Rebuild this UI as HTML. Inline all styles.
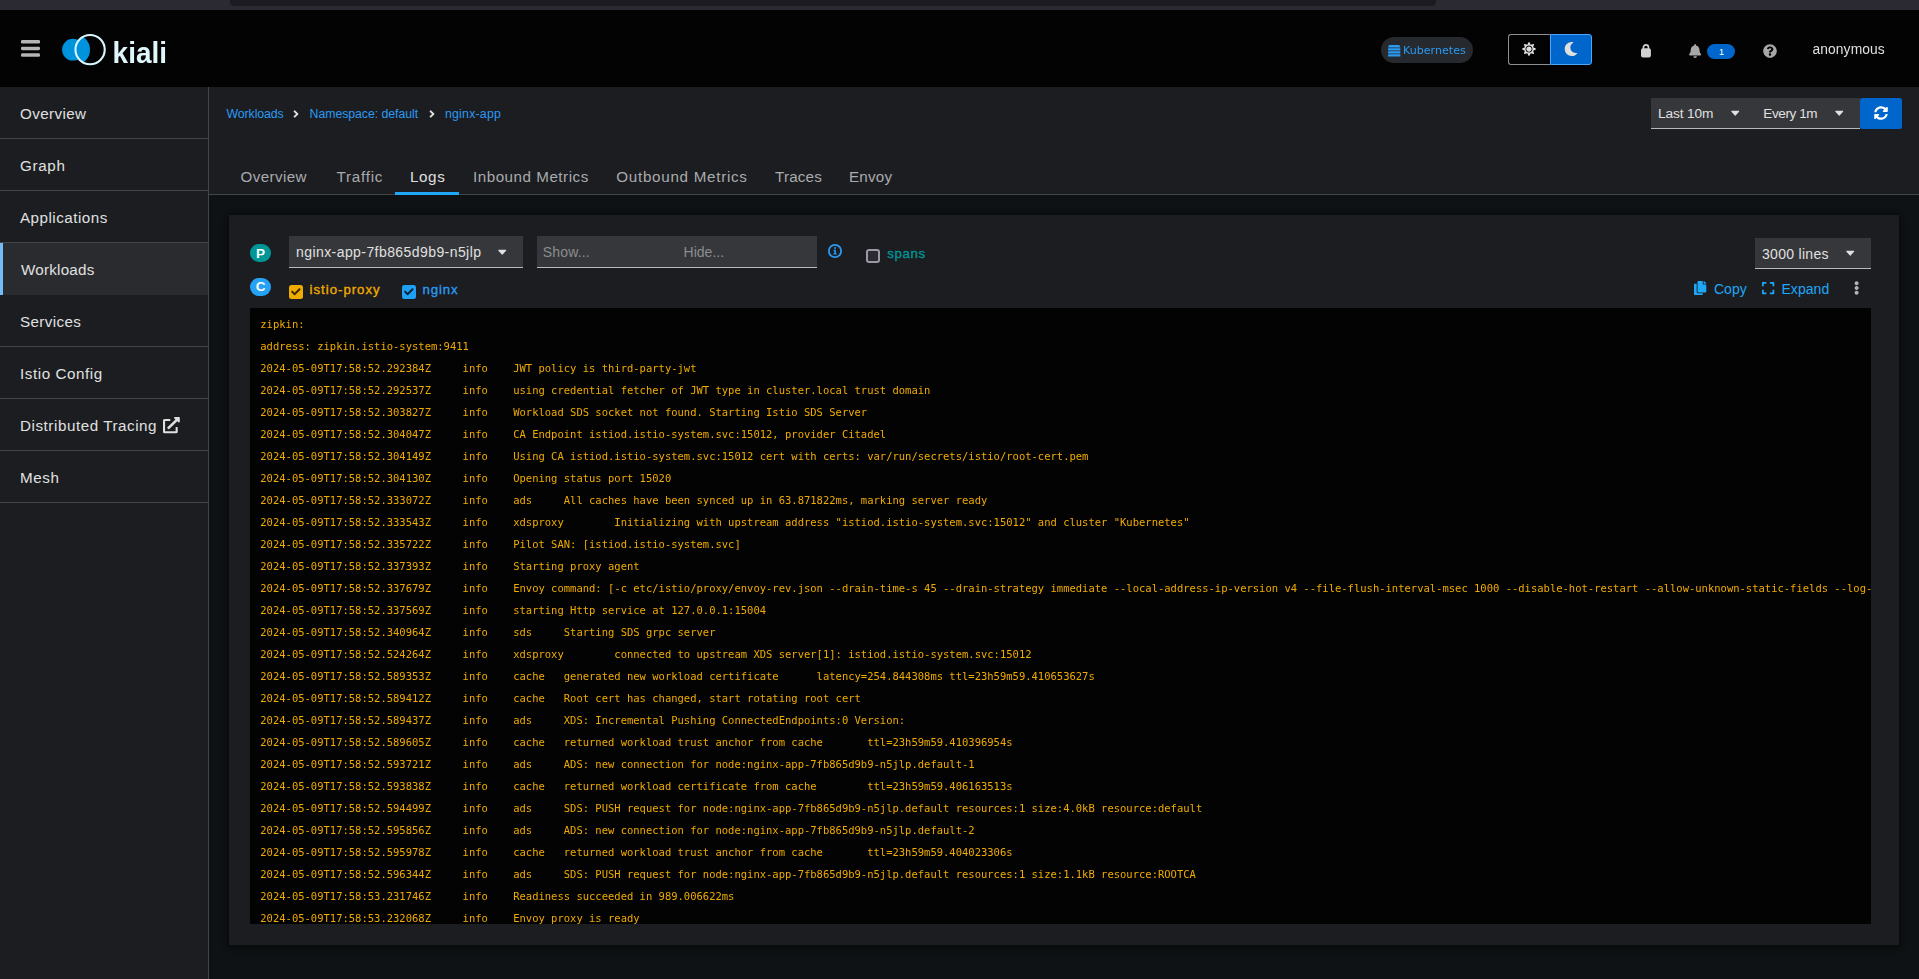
<!DOCTYPE html>
<html lang="en">
<head>
<meta charset="utf-8">
<title>Kiali</title>
<style>
*{box-sizing:border-box;margin:0;padding:0}
html,body{width:1919px;height:979px;overflow:hidden;background:#0f1214;font-family:"Liberation Sans",sans-serif;color:#e0e0e0}
.abs{position:absolute}
.t{position:absolute;white-space:nowrap;line-height:1}
#chrome{left:0;top:0;width:1919px;height:10px;background:#2b2a33}
#chrome i{position:absolute;left:230px;top:0;width:1206px;height:6px;background:#1c1b22;border-radius:0 0 4px 4px}
#mast{left:0;top:10px;width:1919px;height:77px;background:#030303;filter:opacity(1)}
#side{left:0;top:87px;width:209px;height:892px;background:#1b1d21;border-right:1px solid #444548}
.nav{position:absolute;left:0;width:208px;height:52px;border-bottom:1px solid #444548;font-size:16px;color:#e0e0e0}
.nav.cur{background:#292b2f;border-bottom:0}
.nav.cur:before{content:"";position:absolute;left:0;top:0;width:3px;height:52px;background:#73bcf7}
#head{left:209px;top:87px;width:1710px;height:108px;background:#1b1d21;border-bottom:1px solid #444548}
#panel{left:229px;top:215px;width:1670px;height:730px;background:#1b1d21;box-shadow:0 2px 6px 0 rgba(3,3,3,.5),0 0 4px 0 rgba(3,3,3,.4)}
#log{left:250px;top:308px;width:1621px;height:616px;background:#030303;overflow:hidden}
#log pre{position:absolute;left:10.3px;top:5px;font-family:"DejaVu Sans Mono","Liberation Mono",monospace;font-size:10.5px;line-height:22px;color:#f0ab00;filter:opacity(1);tab-size:8;-moz-tab-size:8;white-space:pre}
.bc{color:#2b9af3}
.tab{color:#aaabac}
.fc{position:absolute;background:#36373a;border-bottom:1px solid #b8bbbe}
svg{position:absolute;overflow:visible}
</style>
</head>
<body>
<div id="chrome" class="abs"><i></i></div>
<div id="mast" class="abs">
  <svg style="left:21px;top:30px" width="19" height="17" viewBox="0 0 19 17"><g fill="#b3b4b6"><rect x="0" y="0.1" width="19" height="3.5" rx="1.3"/><rect x="0" y="6.75" width="19" height="3.4" rx="1.3"/><rect x="0" y="13.3" width="19" height="3.5" rx="1.3"/></g></svg>
  <svg id="logo" style="left:55px;top:18px" width="120" height="44" viewBox="55 28 120 44">
    <defs><clipPath id="lens"><circle cx="90" cy="49.6" r="14.6"/></clipPath></defs>
    <circle cx="73" cy="49.7" r="10.9" fill="#0093dd"/>
    <circle cx="74.5" cy="49.7" r="15.5" fill="#0093dd" clip-path="url(#lens)"/>
    <circle cx="90.1" cy="49.6" r="14.65" fill="none" stroke="#d9f5fd" stroke-width="2.1"/>
    <text id="kiali" x="112.6" y="62.9" font-family="Liberation Sans, sans-serif" font-weight="700" font-size="30" fill="#dff6fd" textLength="54.4" lengthAdjust="spacingAndGlyphs">kiali</text>
  </svg>
  <div class="abs" style="left:1381px;top:27px;width:92px;height:26px;border-radius:13px;background:#26292d"></div>
  <svg style="left:1388px;top:34.8px" width="12.4" height="11.6" viewBox="0 0 12.4 11.6"><g fill="#2b9af3"><path d="M1.6 0h9.2c.5 0 .9.3 1 .8l.6 1.7H0L.6.8c.1-.5.5-.8 1-.8z"/><rect x="0" y="3.3" width="12.4" height="2.2" rx=".4"/><rect x="0" y="6.3" width="12.4" height="2.2" rx=".4"/><rect x="0" y="9.3" width="12.4" height="2.3" rx=".4"/></g></svg>
  <span class="t" id="kube" style="left:1403.00px;top:34.70px;font-family:'DejaVu Sans',sans-serif;font-size:11.05px;color:#2b9af3;letter-spacing:0.020px">Kubernetes</span>
  <div class="abs" style="left:1508px;top:24px;width:42px;height:31px;border:1px solid #8f8f8f;border-right:0;border-radius:3px 0 0 3px;background:#030303"></div>
  <div class="abs" style="left:1550px;top:24px;width:42px;height:31px;border:1px solid #4da6f7;border-radius:0 3px 3px 0;background:#0066cc"></div>
  <svg style="left:1521.95px;top:31.95px" width="14" height="14" viewBox="0 0 512 512"><path fill="#e0e0e0" d="M256 160c-52.900 0-96 43.100-96 96s43.100 96 96 96 96-43.100 96-96-43.100-96-96-96zm246.400 80.500l-94.700-47.300 33.500-100.400c4.500-13.600-8.400-26.500-21.900-21.900l-100.400 33.500-47.400-94.800c-6.400-12.800-24.600-12.800-31 0l-47.300 94.700L92.700 70.800c-13.600-4.500-26.500 8.400-21.900 21.900l33.500 100.400-94.700 47.400c-12.800 6.400-12.800 24.600 0 31l94.700 47.300-33.500 100.500c-4.500 13.600 8.400 26.500 21.900 21.900l100.400-33.500 47.300 94.700c6.400 12.800 24.600 12.800 31 0l47.300-94.700 100.400 33.500c13.600 4.500 26.500-8.400 21.900-21.900l-33.500-100.400 94.700-47.300c13-6.500 13-24.700.2-31.100zm-155.900 106c-49.900 49.900-131.100 49.900-181 0-49.900-49.900-49.900-131.100 0-181 49.900-49.900 131.100-49.900 181 0 49.900 49.900 49.900 131.100 0 181z"/></svg>
  <svg style="left:1563.9px;top:31.9px" width="14" height="14" viewBox="0 0 512 512"><path fill="#e0e0e0" d="M283.211 512c78.962 0 151.079-35.925 198.857-94.792 7.068-8.708-.639-21.430-11.562-19.350-124.203 23.654-238.262-71.576-238.262-196.954 0-72.222 38.662-138.635 101.498-174.394 9.686-5.512 7.250-20.197-3.756-22.230A258.156 258.156 0 0 0 283.211 0c-141.309 0-256 114.511-256 256 0 141.309 114.511 256 256 256z"/></svg>
  <svg style="left:1641.1px;top:34.3px" width="9.9" height="13.5" viewBox="0 0 9.9 13.5"><rect x="0" y="4.3" width="9.9" height="9.2" rx="2" fill="#d2d2d2"/><path d="M2.45 5.5V3.35a2.5 2.5 0 0 1 5 0V5.5" fill="none" stroke="#d2d2d2" stroke-width="1.7"/></svg>
  <svg style="left:1688.8px;top:34.2px" width="12.25" height="14" viewBox="0 0 448 512"><path fill="#a8a8a8" d="M224 512c35.320 0 63.970-28.650 63.970-64H160.030c0 35.350 28.650 64 63.970 64zm215.390-149.710c-19.320-20.760-55.470-51.990-55.470-154.290 0-77.700-54.480-139.900-127.940-155.160V32c0-17.670-14.320-32-31.980-32s-31.980 14.330-31.980 32v20.840C118.560 68.100 64.080 130.300 64.080 208c0 102.300-36.150 133.530-55.470 154.290-6 6.450-8.660 14.160-8.610 21.710.11 16.400 12.980 32 32.100 32h383.800c19.120 0 32-15.600 32.100-32 .05-7.550-2.610-15.270-8.610-21.710z"/></svg>
  <div class="abs" style="left:1707px;top:34px;width:28px;height:15px;border-radius:7.5px;background:#0066cc"></div>
  <span class="t" id="one" style="left:1719px;top:37.2px;font-size:9.6px;color:#fff">1</span>
  <svg style="left:1763px;top:34.2px" width="14" height="14" viewBox="0 0 512 512"><path fill="#a8a8a8" d="M504 256c0 136.997-111.043 248-248 248S8 392.997 8 256C8 119.083 119.043 8 256 8s248 111.083 248 248zM262.655 90c-54.497 0-89.255 22.957-116.549 63.758-3.536 5.286-2.353 12.415 2.715 16.258l34.699 26.310c5.205 3.947 12.621 3.008 16.665-2.122 17.864-22.658 30.113-35.797 57.303-35.797 20.429 0 45.698 13.148 45.698 32.958 0 14.976-12.363 22.667-32.534 33.976C247.128 238.528 216 254.941 216 296v4c0 6.627 5.373 12 12 12h56c6.627 0 12-5.373 12-12v-1.333c0-28.462 83.186-29.647 83.186-106.667 0-58.002-60.165-102-116.531-102zM256 338c-25.365 0-46 20.635-46 46 0 25.364 20.635 46 46 46s46-20.636 46-46c0-25.365-20.635-46-46-46z"/></svg>
  <span class="t" id="anon" style="left:1812.50px;top:32.84px;font-size:13.8px;color:#e0e0e0;letter-spacing:0.108px">anonymous</span>
</div>
<div id="side" class="abs">
  <div class="nav" style="top:0"><span class="t" id="nav1" style="left:20.00px;top:19.20px;font-size:15.2px;letter-spacing:0.386px">Overview</span></div>
  <div class="nav" style="top:52px"><span class="t" id="nav2" style="left:20.00px;top:19.20px;font-size:15.2px;letter-spacing:0.685px">Graph</span></div>
  <div class="nav" style="top:104px"><span class="t" id="nav3" style="left:20.00px;top:19.20px;font-size:15.2px;letter-spacing:0.488px">Applications</span></div>
  <div class="nav cur" style="top:156px"><span class="t" id="nav4" style="left:21.00px;top:19.20px;font-size:15.2px;letter-spacing:0.225px">Workloads</span></div>
  <div class="nav" style="top:208px"><span class="t" id="nav5" style="left:20.00px;top:19.20px;font-size:15.2px;letter-spacing:0.381px">Services</span></div>
  <div class="nav" style="top:260px"><span class="t" id="nav6" style="left:20.00px;top:19.20px;font-size:15.2px;letter-spacing:0.569px">Istio Config</span></div>
  <div class="nav" style="top:312px"><span class="t" id="nav7" style="left:20.00px;top:19.20px;font-size:15.2px;letter-spacing:0.550px">Distributed Tracing</span><svg style="left:162.5px;top:17.8px" width="16.8" height="16.2" viewBox="0 0 512 512" preserveAspectRatio="none"><path fill="#e0e0e0" d="M432,320H400a16,16,0,0,0-16,16V448H64V128H208a16,16,0,0,0,16-16V80a16,16,0,0,0-16-16H48A48,48,0,0,0,0,112V464a48,48,0,0,0,48,48H400a48,48,0,0,0,48-48V336A16,16,0,0,0,432,320ZM488,0h-128c-21.370,0-32.050,25.910-17,41l35.730,35.730L135,320.370a24,24,0,0,0,0,34L157.670,377a24,24,0,0,0,34,0L435.280,133.320,471,169c15,15,41,4.500,41-17V24A24,24,0,0,0,488,0Z"/></svg></div>
  <div class="nav" style="top:364px"><span class="t" id="nav8" style="left:20.00px;top:19.20px;font-size:15.2px;letter-spacing:0.600px">Mesh</span></div>
</div>
<div id="head" class="abs">
  <span class="t bc" id="bc1" style="font-size:12.3px;left:17.60px;top:21.08px;letter-spacing:-0.108px">Workloads</span>
  <svg style="left:83.9px;top:20.6px" width="6" height="12" viewBox="0 0 256 512"><path fill="#e0e0e0" d="M224.300 273l-136 136c-9.400 9.400-24.600 9.400-33.900 0l-22.600-22.600c-9.400-9.400-9.400-24.600 0-33.900l96.400-96.400-96.400-96.400c-9.400-9.400-9.400-24.600 0-33.900L54.300 103c9.400-9.400 24.600-9.400 33.900 0l136 136c9.500 9.400 9.500 24.600.1 34z"/></svg>
  <span class="t bc" id="bc2" style="font-size:12.3px;left:100.60px;top:21.08px;letter-spacing:-0.051px">Namespace: default</span>
  <svg style="left:219.9px;top:20.6px" width="6" height="12" viewBox="0 0 256 512"><path fill="#e0e0e0" d="M224.300 273l-136 136c-9.400 9.400-24.600 9.400-33.900 0l-22.600-22.600c-9.400-9.400-9.400-24.600 0-33.900l96.400-96.400-96.400-96.400c-9.400-9.400-9.400-24.600 0-33.900L54.300 103c9.400-9.400 24.600-9.400 33.900 0l136 136c9.500 9.400 9.500 24.600.1 34z"/></svg>
  <span class="t bc" id="bc3" style="font-size:12.3px;left:236.00px;top:21.08px;letter-spacing:0.221px">nginx-app</span>
  <span class="t tab" id="tab1" style="font-size:15.2px;left:31.50px;top:82.20px;letter-spacing:0.386px">Overview</span>
  <span class="t tab" id="tab2" style="font-size:15.2px;left:127.50px;top:82.20px;letter-spacing:0.750px">Traffic</span>
  <span class="t tab" id="tab3" style="font-size:15.2px;left:201.00px;top:82.20px;color:#e0e0e0;letter-spacing:0.600px">Logs</span>
  <span class="t tab" id="tab4" style="font-size:15.2px;left:264.00px;top:82.20px;letter-spacing:0.514px">Inbound Metrics</span>
  <span class="t tab" id="tab5" style="font-size:15.2px;left:407.30px;top:82.20px;letter-spacing:0.720px">Outbound Metrics</span>
  <span class="t tab" id="tab6" style="font-size:15.2px;left:566.00px;top:82.20px;letter-spacing:0.180px">Traces</span>
  <span class="t tab" id="tab7" style="font-size:15.2px;left:640.00px;top:82.20px;letter-spacing:0.226px">Envoy</span>
  <div class="abs" style="left:186px;top:105px;width:64px;height:3px;background:#1fa7f8"></div>
  <div class="fc" style="left:1442px;top:11px;width:209px;height:31px"></div>
  <span class="t" id="dd1" style="left:1449.00px;top:19.90px;font-size:13.7px;letter-spacing:-0.129px">Last 10m</span>
  <svg style="left:1521.60px;top:18.10px" width="8.5" height="15.2" viewBox="0 0 320 512" preserveAspectRatio="none"><path fill="#e0e0e0" d="M31.3 192h257.3c17.8 0 26.7 21.5 14.1 34.1L174.1 354.8c-7.8 7.8-20.5 7.8-28.3 0L17.200 226.100C4.600 213.500 13.500 192 31.300 192z"/></svg>
  <span class="t" id="dd2" style="left:1554.30px;top:20.02px;font-size:13.5px;letter-spacing:-0.387px">Every 1m</span>
  <svg style="left:1625.60px;top:18.10px" width="8.5" height="15.2" viewBox="0 0 320 512" preserveAspectRatio="none"><path fill="#e0e0e0" d="M31.3 192h257.3c17.8 0 26.7 21.5 14.1 34.1L174.1 354.8c-7.8 7.8-20.5 7.8-28.3 0L17.200 226.100C4.600 213.500 13.500 192 31.300 192z"/></svg>
  <div class="abs" style="left:1651px;top:11px;width:42px;height:31px;border-radius:2.5px;background:#0066cc"></div>
  <svg style="left:1664.9px;top:18.5px" width="14" height="14" viewBox="0 0 512 512"><path fill="#fff" d="M370.720 133.280C339.458 104.008 298.888 87.962 255.848 88c-77.458.068-144.328 53.178-162.791 126.850-1.344 5.363-6.122 9.150-11.651 9.150H24.103c-7.498 0-13.194-6.807-11.807-14.176C33.933 94.924 134.813 8 256 8c66.448 0 126.791 26.136 171.315 68.685L463.030 40.970C478.149 25.851 504 36.559 504 57.941V192c0 13.255-10.745 24-24 24H345.941c-21.382 0-32.090-25.851-16.971-40.971l41.750-41.749zM32 296h134.059c21.382 0 32.090 25.851 16.971 40.971l-41.750 41.750c31.262 29.273 71.835 45.319 114.876 45.280 77.418-.070 144.315-53.144 162.787-126.849 1.344-5.363 6.122-9.150 11.651-9.150h57.304c7.498 0 13.194 6.807 11.807 14.176C478.067 417.076 377.187 504 256 504c-66.448 0-126.791-26.136-171.315-68.685L48.970 471.030C33.851 486.149 8 475.441 8 454.059V320c0-13.255 10.745-24 24-24z"/></svg>
</div>
<div id="panel" class="abs">
  <div class="abs" style="left:20.8px;top:28.5px;width:21.2px;height:18.4px;border-radius:10px;background:#009596"></div>
  <span class="t" id="pP" style="left:26.9px;top:31.67px;font-size:13.5px;font-weight:700;color:#fff">P</span>
  <div class="abs" style="left:20.8px;top:62.8px;width:21.2px;height:18.4px;border-radius:10px;background:#25a2f6"></div>
  <span class="t" id="pC" style="left:26.8px;top:65.17px;font-size:13.5px;font-weight:700;color:#fff">C</span>
  <div class="fc" style="left:60px;top:21px;width:233.5px;height:32px"></div>
  <span class="t" id="pod" style="left:67.00px;top:30.20px;font-size:14px;letter-spacing:0.424px">nginx-app-7fb865d9b9-n5jlp</span>
  <svg style="left:268.70px;top:29.10px" width="8.5" height="15.2" viewBox="0 0 320 512" preserveAspectRatio="none"><path fill="#e0e0e0" d="M31.3 192h257.3c17.8 0 26.7 21.5 14.1 34.1L174.1 354.8c-7.8 7.8-20.5 7.8-28.3 0L17.200 226.100C4.600 213.500 13.500 192 31.300 192z"/></svg>
  <div class="fc" style="left:307.6px;top:21px;width:280.3px;height:32px"></div>
  <span class="t" id="show" style="left:313.80px;top:30.20px;font-size:14px;color:#8a8d90;letter-spacing:0.150px">Show...</span>
  <span class="t" id="hide" style="left:454.60px;top:30.20px;font-size:14px;color:#8a8d90;letter-spacing:0.000px">Hide...</span>
  <svg style="left:599px;top:29.2px" width="14" height="14" viewBox="0 0 14 14"><circle cx="7" cy="7" r="6.15" fill="none" stroke="#2b9af3" stroke-width="1.8"/><circle cx="7" cy="3.9" r="1" fill="#2b9af3"/><path fill="#2b9af3" d="M5.400 5.700h2.500v3.900h.9v1H5.300v-1h.9V6.700h-.8z"/></svg>
  <div class="abs" style="left:637px;top:34.2px;width:13.8px;height:13.8px;border:2.2px solid #9b98a6;border-radius:3px;background:#2b2a33"></div>
  <span class="t" id="spans" style="left:658.20px;top:32.18px;font-size:13.2px;font-weight:400;-webkit-text-stroke:0.35px #009596;color:#009596;letter-spacing:0.676px">spans</span>
  <div class="abs" style="left:59.8px;top:69.8px;width:14.2px;height:14px;border-radius:2.5px;background:#f0ab00"></div>
  <svg style="left:62.2px;top:72.2px" width="9.6" height="9.6" viewBox="0 0 512 512"><path fill="#3a2800" d="M173.898 439.404l-166.400-166.400c-9.997-9.997-9.997-26.206 0-36.204l36.203-36.204c9.997-9.998 26.207-9.998 36.204 0L192 312.690 432.095 72.596c9.997-9.997 26.207-9.997 36.204 0l36.203 36.204c9.997 9.997 9.997 26.206 0 36.204l-294.400 294.401c-9.998 9.997-26.207 9.997-36.204-.001z"/></svg>
  <span class="t" id="istio" style="left:80.60px;top:68.12px;font-size:13.2px;font-weight:400;-webkit-text-stroke:0.35px #f0ab00;color:#f0ab00;letter-spacing:0.990px">istio-proxy</span>
  <div class="abs" style="left:172.8px;top:69.8px;width:14.2px;height:14px;border-radius:2.5px;background:#1fa0f5"></div>
  <svg style="left:175.2px;top:72.2px" width="9.6" height="9.6" viewBox="0 0 512 512"><path fill="#0c2238" d="M173.898 439.404l-166.400-166.400c-9.997-9.997-9.997-26.206 0-36.204l36.203-36.204c9.997-9.998 26.207-9.998 36.204 0L192 312.690 432.095 72.596c9.997-9.997 26.207-9.997 36.204 0l36.203 36.204c9.997 9.997 9.997 26.206 0 36.204l-294.400 294.401c-9.998 9.997-26.207 9.997-36.204-.001z"/></svg>
  <span class="t" id="nginx" style="left:193.50px;top:68.12px;font-size:13.2px;font-weight:400;-webkit-text-stroke:0.35px #2b9af3;color:#2b9af3;letter-spacing:0.900px">nginx</span>
  <div class="fc" style="left:1526px;top:23px;width:116px;height:31px"></div>
  <span class="t" id="lines" style="left:1533.00px;top:32.20px;font-size:14px;letter-spacing:0.300px">3000 lines</span>
  <svg style="left:1616.60px;top:30.10px" width="8.5" height="15.2" viewBox="0 0 320 512" preserveAspectRatio="none"><path fill="#e0e0e0" d="M31.3 192h257.3c17.8 0 26.7 21.5 14.1 34.1L174.1 354.8c-7.8 7.8-20.5 7.8-28.3 0L17.200 226.100C4.600 213.500 13.500 192 31.300 192z"/></svg>
  <svg style="left:1464.6px;top:66px" width="12.3" height="14" viewBox="0 0 448 512"><path fill="#1fa7f8" d="M320 448v40c0 13.255-10.745 24-24 24H24c-13.255 0-24-10.745-24-24V120c0-13.255 10.745-24 24-24h72v296c0 30.879 25.121 56 56 56h168zm0-344V0H152c-13.255 0-24 10.745-24 24v368c0 13.255 10.745 24 24 24h272c13.255 0 24-10.745 24-24V128H344c-13.200 0-24-10.800-24-24zm120.971-31.029L375.029 7.029A24 24 0 0 0 358.059 0H352v96h96v-6.059a24 24 0 0 0-7.029-16.970z"/></svg>
  <span class="t" id="copy" style="left:1485.00px;top:67.20px;font-size:14px;color:#1fa7f8;letter-spacing:-0.000px">Copy</span>
  <svg style="left:1532.8px;top:66.2px" width="12.25" height="14" viewBox="0 0 448 512"><path fill="#1fa7f8" d="M0 180V56c0-13.300 10.700-24 24-24h124c6.600 0 12 5.400 12 12v40c0 6.600-5.400 12-12 12H64v84c0 6.600-5.400 12-12 12H12c-6.600 0-12-5.400-12-12zM288 44v40c0 6.600 5.400 12 12 12h84v84c0 6.600 5.400 12 12 12h40c6.600 0 12-5.400 12-12V56c0-13.300-10.700-24-24-24H300c-6.600 0-12 5.400-12 12zm148 276h-40c-6.600 0-12 5.400-12 12v84h-84c-6.600 0-12 5.400-12 12v40c0 6.600 5.400 12 12 12h124c13.300 0 24-10.700 24-24V332c0-6.600-5.400-12-12-12zM160 468v-40c0-6.600-5.400-12-12-12H64v-84c0-6.600-5.400-12-12-12H12c-6.600 0-12 5.400-12 12v124c0 13.300 10.700 24 24 24h124c6.600 0 12-5.400 12-12z"/></svg>
  <span class="t" id="expand" style="left:1552.50px;top:67.20px;font-size:14px;color:#1fa7f8;letter-spacing:0.036px">Expand</span>
  <svg style="left:1625.4px;top:66px" width="5.25" height="14" viewBox="0 0 192 512"><path fill="#b4b4b4" d="M96 184c39.800 0 72 32.200 72 72s-32.200 72-72 72-72-32.200-72-72 32.200-72 72-72zM24 80c0 39.800 32.200 72 72 72s72-32.200 72-72S135.800 8 96 8 24 40.200 24 80zm0 352c0 39.800 32.200 72 72 72s72-32.200 72-72-32.200-72-72-72-72 32.200-72 72z"/></svg>
</div>
<div id="log" class="abs"><pre id="logtext">zipkin:
address: zipkin.istio-system:9411
2024-05-09T17:58:52.292384Z	info	JWT policy is third-party-jwt
2024-05-09T17:58:52.292537Z	info	using credential fetcher of JWT type in cluster.local trust domain
2024-05-09T17:58:52.303827Z	info	Workload SDS socket not found. Starting Istio SDS Server
2024-05-09T17:58:52.304047Z	info	CA Endpoint istiod.istio-system.svc:15012, provider Citadel
2024-05-09T17:58:52.304149Z	info	Using CA istiod.istio-system.svc:15012 cert with certs: var/run/secrets/istio/root-cert.pem
2024-05-09T17:58:52.304130Z	info	Opening status port 15020
2024-05-09T17:58:52.333072Z	info	ads	All caches have been synced up in 63.871822ms, marking server ready
2024-05-09T17:58:52.333543Z	info	xdsproxy	Initializing with upstream address "istiod.istio-system.svc:15012" and cluster "Kubernetes"
2024-05-09T17:58:52.335722Z	info	Pilot SAN: [istiod.istio-system.svc]
2024-05-09T17:58:52.337393Z	info	Starting proxy agent
2024-05-09T17:58:52.337679Z	info	Envoy command: [-c etc/istio/proxy/envoy-rev.json --drain-time-s 45 --drain-strategy immediate --local-address-ip-version v4 --file-flush-interval-msec 1000 --disable-hot-restart --allow-unknown-static-fields --log-format %Y-%m-%dT%T.%fZ	%l	envoy %n %g:%#	%v	thread=%t -l warning --component-log-level misc:error --concurrency 2]
2024-05-09T17:58:52.337569Z	info	starting Http service at 127.0.0.1:15004
2024-05-09T17:58:52.340964Z	info	sds	Starting SDS grpc server
2024-05-09T17:58:52.524264Z	info	xdsproxy	connected to upstream XDS server[1]: istiod.istio-system.svc:15012
2024-05-09T17:58:52.589353Z	info	cache	generated new workload certificate	latency=254.844308ms ttl=23h59m59.410653627s
2024-05-09T17:58:52.589412Z	info	cache	Root cert has changed, start rotating root cert
2024-05-09T17:58:52.589437Z	info	ads	XDS: Incremental Pushing ConnectedEndpoints:0 Version:
2024-05-09T17:58:52.589605Z	info	cache	returned workload trust anchor from cache	ttl=23h59m59.410396954s
2024-05-09T17:58:52.593721Z	info	ads	ADS: new connection for node:nginx-app-7fb865d9b9-n5jlp.default-1
2024-05-09T17:58:52.593838Z	info	cache	returned workload certificate from cache	ttl=23h59m59.406163513s
2024-05-09T17:58:52.594499Z	info	ads	SDS: PUSH request for node:nginx-app-7fb865d9b9-n5jlp.default resources:1 size:4.0kB resource:default
2024-05-09T17:58:52.595856Z	info	ads	ADS: new connection for node:nginx-app-7fb865d9b9-n5jlp.default-2
2024-05-09T17:58:52.595978Z	info	cache	returned workload trust anchor from cache	ttl=23h59m59.404023306s
2024-05-09T17:58:52.596344Z	info	ads	SDS: PUSH request for node:nginx-app-7fb865d9b9-n5jlp.default resources:1 size:1.1kB resource:ROOTCA
2024-05-09T17:58:53.231746Z	info	Readiness succeeded in 989.006622ms
2024-05-09T17:58:53.232068Z	info	Envoy proxy is ready</pre></div>
</body>
</html>
